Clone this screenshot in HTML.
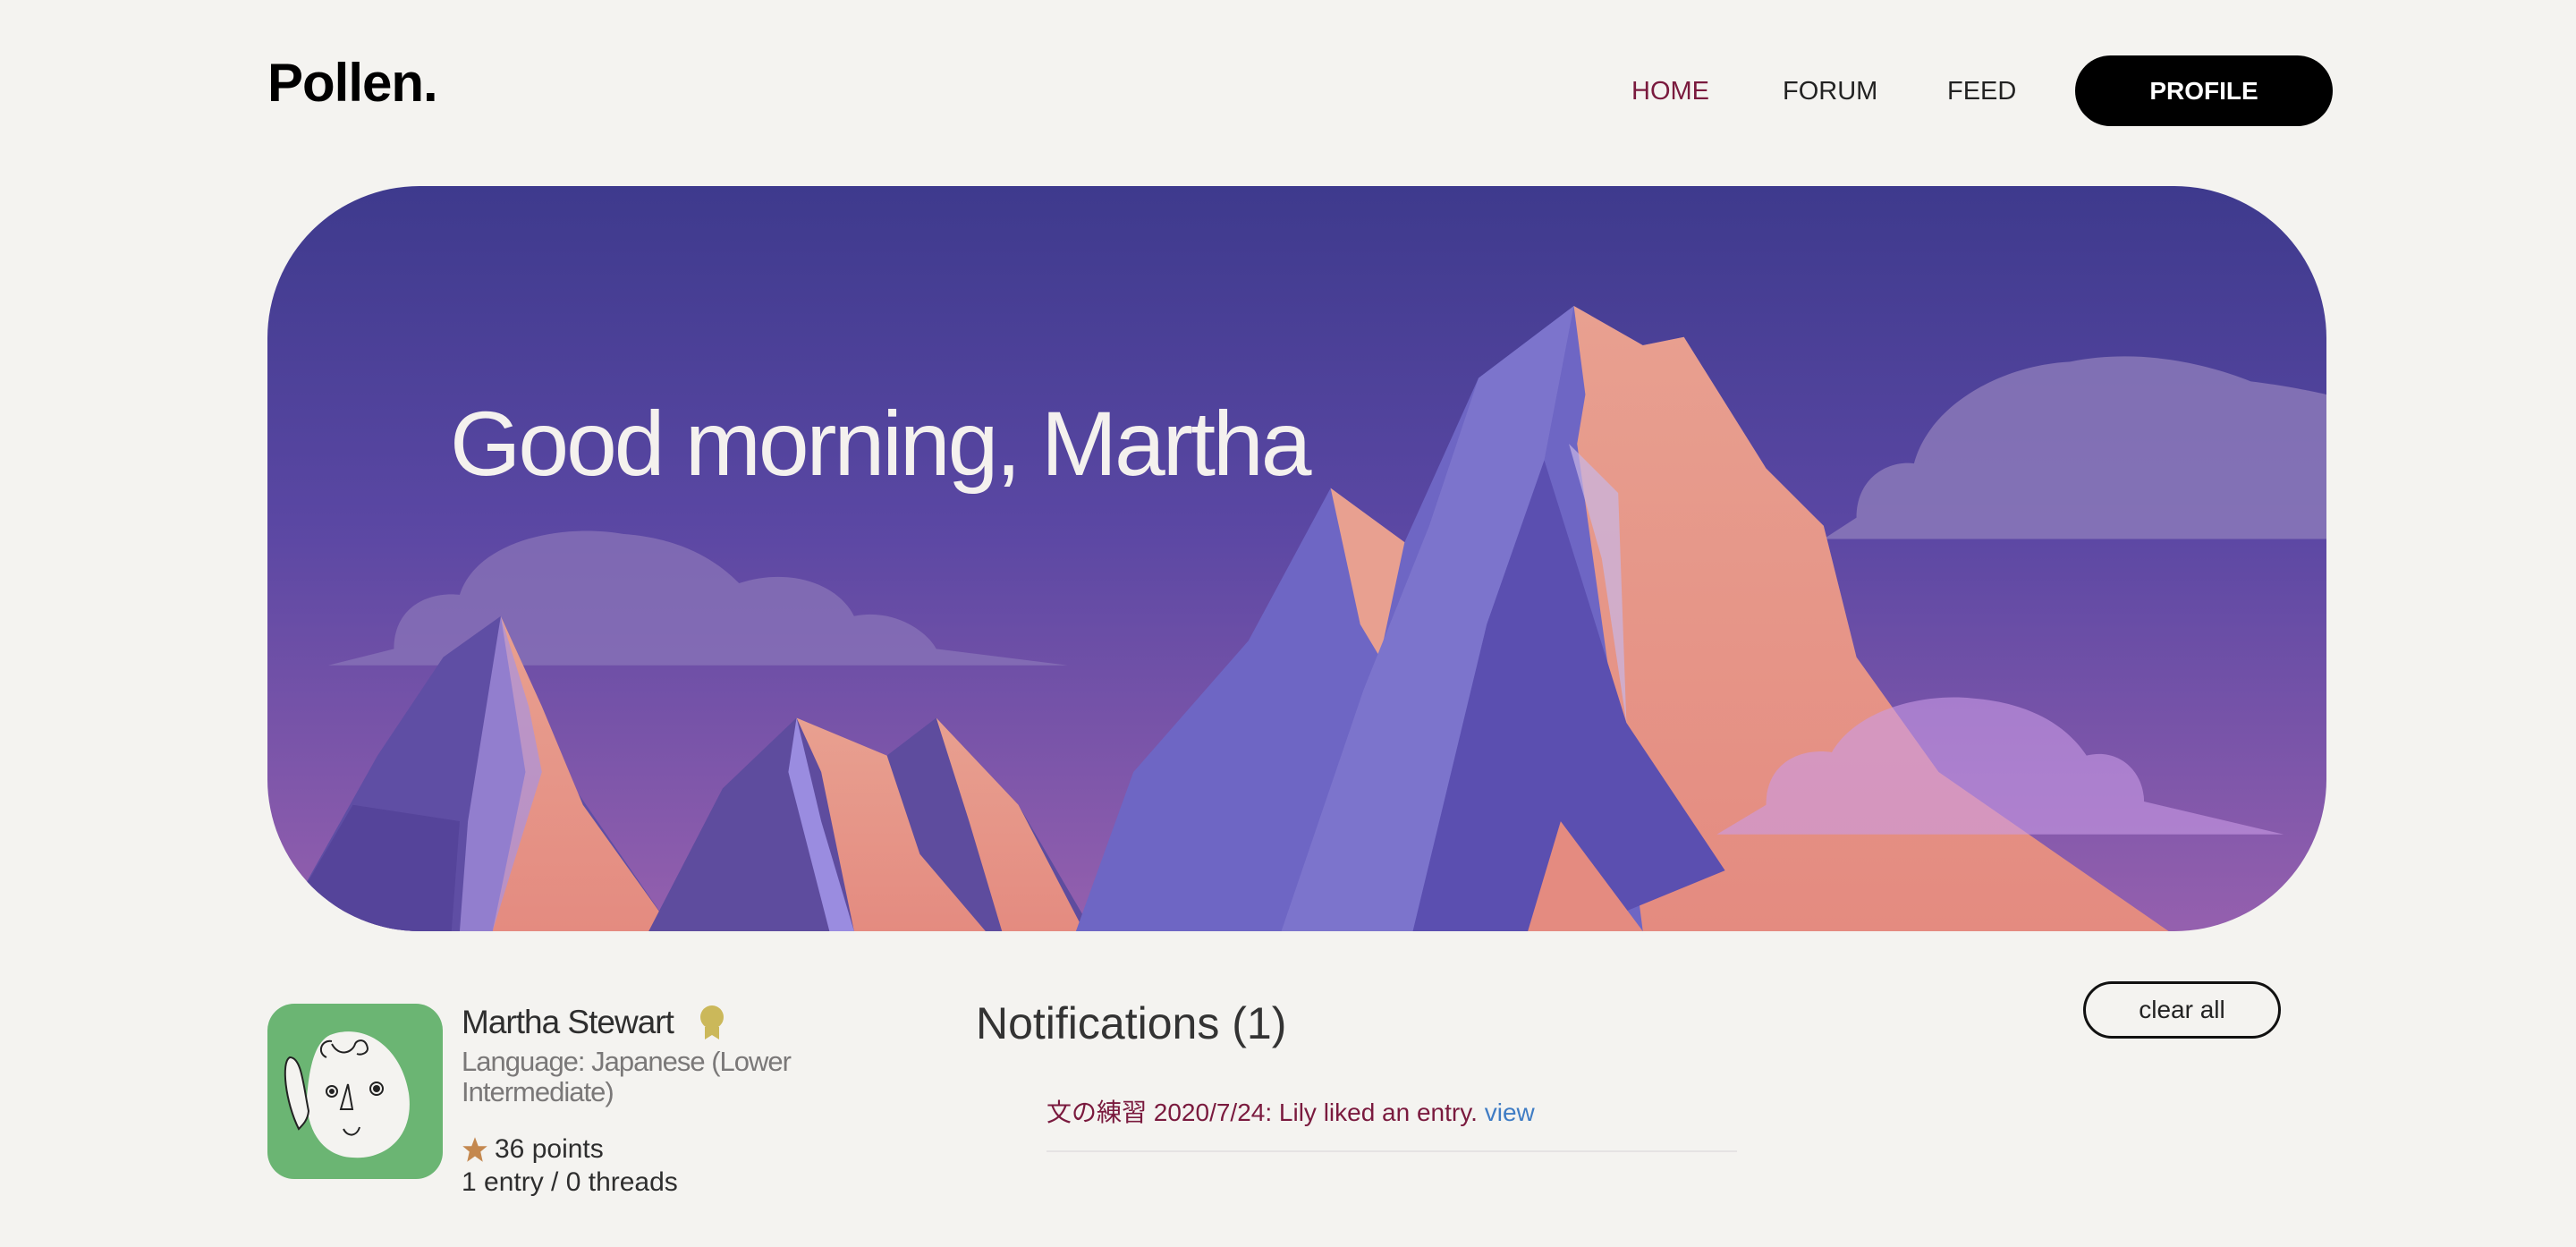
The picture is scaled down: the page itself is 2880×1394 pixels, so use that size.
<!DOCTYPE html>
<html><head><meta charset="utf-8"><style>
*{margin:0;padding:0;box-sizing:border-box}
html,body{width:2880px;height:1394px;background:#f4f3f0;overflow:hidden;font-family:"Liberation Sans","Noto Sans CJK JP",sans-serif;color:#2a2a2a}
.abs{position:absolute;white-space:nowrap}
.logo{left:299px;top:58px;font-size:60px;font-weight:bold;color:#000;letter-spacing:-1px}
.nav{top:86px;font-size:29px;color:#222}
.btn{left:2320px;top:62px;width:288px;height:79px;border-radius:40px;background:#000;color:#fff;font-size:28px;font-weight:bold;text-align:center;line-height:79px}
.hero{position:absolute;left:299px;top:208px;width:2302px;height:833px;border-radius:170px;overflow:hidden}
.greet{left:503px;top:438px;font-size:102px;color:#f4f1ee;letter-spacing:-3px}
</style></head><body>
<div class="abs logo">Pollen.</div>
<div class="abs nav" style="left:1824px;color:#7a1a3e">HOME</div>
<div class="abs nav" style="left:1993px">FORUM</div>
<div class="abs nav" style="left:2177px">FEED</div>
<div class="abs btn">PROFILE</div>

<div class="hero">
<svg width="2302" height="833" viewBox="163 113 1253 454" preserveAspectRatio="none">
<defs>
<linearGradient id="sky" x1="0" y1="0" x2="0" y2="1">
<stop offset="0" stop-color="#3e3a8d"/><stop offset="0.45" stop-color="#5a47a3"/><stop offset="1" stop-color="#9560ae"/></linearGradient>
<linearGradient id="sal" x1="0" y1="0" x2="0" y2="1"><stop offset="0" stop-color="#e8a090"/><stop offset="1" stop-color="#e48b80"/></linearGradient>
</defs>
<rect x="163" y="113" width="1253" height="454" fill="url(#sky)"/>
<path d="M200,405 L240,395 C240,370 260,360 280,362 C290,330 340,318 380,325 C420,328 440,345 450,355 C480,345 510,355 520,375 C545,370 565,385 570,395 L650,405 Z" fill="#8a74b8" opacity="0.75"/>
<path d="M1110,328 L1130,315 C1130,290 1150,280 1165,282 C1175,245 1220,222 1260,220 C1300,212 1340,220 1370,232 C1395,235 1416,240 1416,240 L1416,328 Z" fill="#8d7cba" opacity="0.8"/>
<path d="M170,567 L230,460 L270,400 L305,375 L330,430 L350,480 L410,567 Z" fill="#5f4ea4"/>
<path d="M305,375 L330,430 L355,490 L410,567 L300,567 L320,470 Z" fill="url(#sal)"/>
<path d="M305,375 L322,430 L330,470 L300,567 L280,567 L285,500 Z" fill="#a893e0" opacity="0.7"/>
<path d="M170,567 L215,490 L280,500 L275,567 Z" fill="#55449a"/>
<path d="M395,567 L440,480 L485,437 L540,460 L570,437 L620,490 L665,567 Z" fill="#5e4c9e"/>
<path d="M485,437 L540,460 L560,520 L600,567 L520,567 L500,470 Z" fill="url(#sal)"/>
<path d="M570,437 L620,490 L660,567 L610,567 L590,500 Z" fill="url(#sal)"/>
<path d="M485,437 L500,500 L520,567 L505,567 L480,470 Z" fill="#9a8ce0"/>
<path d="M655,567 L690,470 L760,390 L810,297 L855,330 L900,230 L958,186 L1000,210 L1025,205 L1075,285 L1110,320 L1130,400 L1180,470 L1320,567 Z" fill="#6e66c4"/>
<path d="M958,186 L1000,210 L1025,205 L1075,285 L1110,320 L1130,400 L1180,470 L1320,567 L1000,567 L985,450 L960,270 L965,240 Z" fill="url(#sal)"/>
<path d="M810,297 L855,330 L840,400 L828,380 Z" fill="#e8a090"/>
<path d="M940,280 L990,440 L1050,530 L960,567 L860,567 L905,380 Z" fill="#5b4fb0"/>
<path d="M958,186 L900,230 L870,320 L830,420 L780,567 L860,567 L905,380 L940,280 Z" fill="#7c74cc"/>
<path d="M955,270 L975,340 L990,440 L985,300 Z" fill="#c8b6e6" opacity="0.7"/>
<path d="M950,500 L1000,567 L930,567 Z" fill="#e48b80"/>
<path d="M1045,508 L1075,490 C1075,465 1095,455 1115,458 C1130,432 1170,422 1200,425 C1240,428 1260,445 1270,460 C1290,455 1305,470 1305,488 L1390,508 Z" fill="#c99be6" opacity="0.6"/>
</svg>
</div>
<div class="abs greet">Good morning, Martha</div>

<svg class="abs" style="left:299px;top:1122px" width="196" height="196" viewBox="0 0 196 196">
<rect width="196" height="196" rx="30" fill="#6bb573"/>
<path d="M70,35 C110,20 150,50 158,100 C165,150 130,175 95,172 C55,170 40,130 45,95 C48,65 55,42 70,35Z" fill="#f4f3f0"/>
<path d="M66,60 C55,55 60,40 72,42 M72,45 C80,60 95,55 98,45 C100,40 110,38 112,50 C112,55 105,58 100,56" stroke="#222" stroke-width="2" fill="none"/>
<circle cx="72" cy="98" r="6" fill="none" stroke="#222" stroke-width="2"/><circle cx="72" cy="98" r="3" fill="#222"/>
<circle cx="122" cy="95" r="7" fill="none" stroke="#222" stroke-width="2"/><circle cx="122" cy="95" r="4" fill="#222"/>
<path d="M90,90 L82,118 L95,118 Z" stroke="#222" stroke-width="2" fill="none"/>
<path d="M85,140 C90,150 100,148 103,138" stroke="#222" stroke-width="2" fill="none"/>
<path d="M25,60 C15,65 20,110 35,140 C40,135 45,130 46,120 C40,90 38,60 25,60Z" stroke="#222" stroke-width="2" fill="#f4f3f0"/>
</svg>
<div class="abs" style="left:516px;top:1122px;font-size:37px;color:#2e2e2e;letter-spacing:-1px">Martha Stewart</div>
<svg class="abs" style="left:780px;top:1122px" width="32" height="42" viewBox="0 0 32 42"><circle cx="16" cy="15" r="13" fill="#cbb85a"/><path d="M8,26 L8,40 L16,35 L24,40 L24,26Z" fill="#cbb85a"/></svg>
<div class="abs" style="left:516px;top:1170px;font-size:31px;color:#7a7878;line-height:34px;letter-spacing:-1px;white-space:normal;width:420px">Language: Japanese (Lower Intermediate)</div>
<svg class="abs" style="left:516px;top:1270px" width="30" height="30" viewBox="0 0 24 24"><path d="M12,1 L15,9 L23,9 L17,14 L19,23 L12,18 L5,23 L7,14 L1,9 L9,9Z" fill="#c4884f"/></svg>
<div class="abs" style="left:553px;top:1268px;font-size:30px;color:#2e2e2e">36 points</div>
<div class="abs" style="left:516px;top:1305px;font-size:30px;color:#2e2e2e">1 entry / 0 threads</div>

<div class="abs" style="left:1091px;top:1115px;font-size:50px;color:#333">Notifications (1)</div>
<div class="abs" style="left:2329px;top:1097px;width:221px;height:64px;border:3px solid #111;border-radius:32px;text-align:center;line-height:58px;font-size:28px;color:#222">clear all</div>
<div class="abs" style="left:1170px;top:1222px;font-size:28px;color:#7a1a3e">文の練習 2020/7/24: Lily liked an entry. <span style="color:#3f7cc4">view</span></div>
<div class="abs" style="left:1170px;top:1286px;width:772px;height:2px;background:#e5e3e3"></div>
</body></html>
